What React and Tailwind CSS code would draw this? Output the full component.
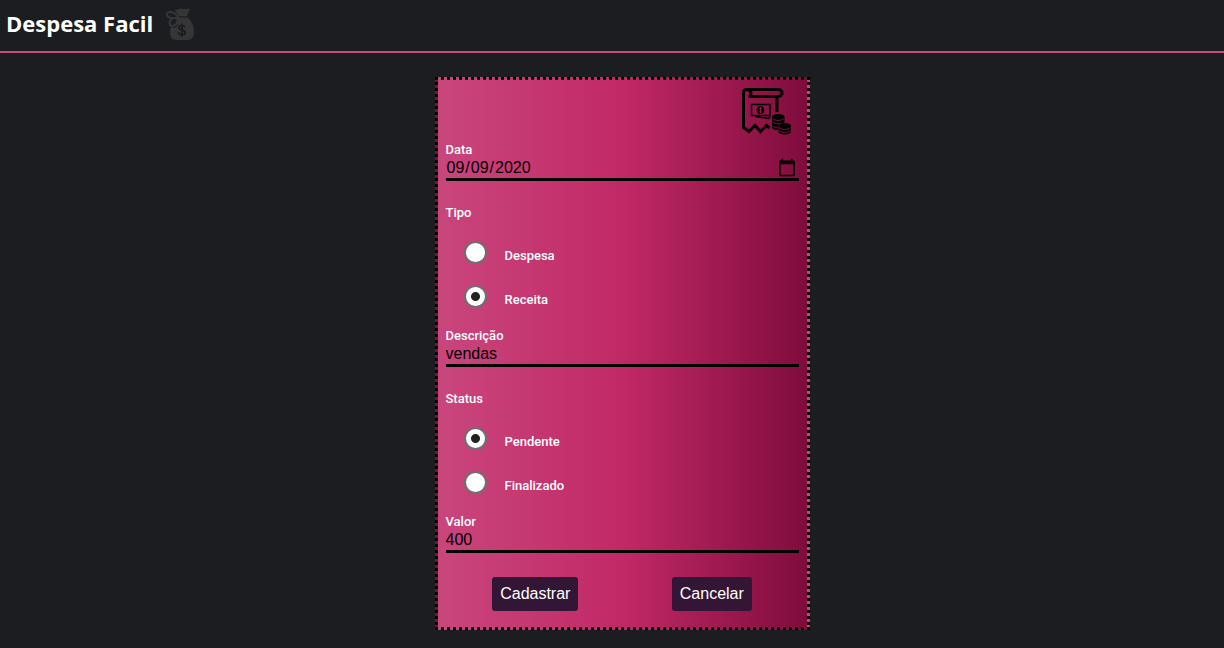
function MoneyBag() {
  return (
    <svg viewBox="0 0 32 36" className="h-9 w-8 text-[#363636]" fill="currentColor" aria-hidden="true">
      <path d="M9.500 3.500c2 .8 3.500.2 5-.7 1.700-.7 3 .7 4.600.5s3.400-1 5.900-.3l-3.500 7.300H14z" />
      <path d="M13 11.500h9.800c3.700 3.500 6.200 8.500 6.200 13.500 0 6-2 9-7 9H12c-5 0-7-3-7-8 0-1.800.2-3.400.7-5 3.800 2 8.300-.5 7.300-6z" />
      <g fill="none" stroke="currentColor" strokeWidth="2">
        <path d="M13 11.500C11 7.500 8 5.800 5 6 2 6.200 1 8.500 2.500 10.300 4.500 12.300 9 12.500 13 11.500zM12.500 11.500C7 12 4.300 14.500 4.500 17.300c.3 2.700 3.500 3.400 5.700 1.700 2-1.500 2.500-4.500 2.300-7.500z" />
      </g>
      <path d="M20 21.300c-.5-1.500-1.600-1.900-3.100-1.900-1.900 0-3 .9-3 2.200 0 3.200 6.300 1.500 6.300 4.800 0 1.600-1.400 2.400-3.200 2.400-1.900 0-3.200-.8-3.500-2.500M17 17.500v13.200" fill="none" stroke="#1b1d20" strokeWidth="1.900" />
    </svg>
  );
}

function ReceiptMoney() {
  return (
    <svg viewBox="0 0 50 48" className="h-12 w-[50px]" fill="none" stroke="#000" strokeWidth="3" aria-hidden="true">
      <path d="M6 2.500h31.500a3.500 3.500 0 0 1 0 7H9M6 2.500C3.500 2.500 2.500 4 2.500 6v34.500l5.500 4 6-6 5.500 6 6-6 3 2.500M6 2.500c5 0 5 7 1.500 7M36 9.500V25" />
      <path d="M10.500 17.500h18.500v11H10.500z" strokeWidth="1.500" />
      <path d="M14 29.500l14 2 1-3" strokeWidth="1.500" />
      <ellipse cx="19.500" cy="23" rx="3.800" ry="4" fill="#000" stroke="none" />
      <path d="M21 21.500c-2-1.500-3.500.5-1.500 1.500s.5 3-1.500 1.500M19.500 20v6" stroke="#a01850" strokeWidth=".9" />
      <g fill="#000" stroke="none">
        <path d="M31 30c0-4 12.500-4 12.500 0v5.500c-3.500.3-6.500 1.500-6.500 4.500v3c-4 0-6-1-6-3z" />
        <path d="M37.500 39c0-4 12.500-4 12.500 0v5.500c0 4-12.500 4-12.500 0z" />
      </g>
      <path d="M31.500 31.500c2 2.500 9 2.500 11.500 0M31.500 35c2 1.800 5 2 8 1.500M31.500 39c1.500 1.200 3 1.500 5 1.500M38 40.500c2 2.500 9 2.500 11.500 0M38 43.500c2 2.500 9 2.500 11.500 0" stroke="#8d1247" strokeWidth=".9" />
    </svg>
  );
}

function Field({ id, label, ...props }) {
  return (
    <div>
      <label htmlFor={id} className="block text-[13px] leading-4 font-medium">{label}</label>
      <input
        id={id}
        className="block h-[23px] w-full min-w-0 border-b-3 border-black bg-transparent font-['Liberation_Sans',Arial,sans-serif] text-base leading-5 text-black outline-none [&::-webkit-calendar-picker-indicator]:mr-0.5 [&::-webkit-calendar-picker-indicator]:size-5 [&::-webkit-calendar-picker-indicator]:p-0"
        {...props}
      />
    </div>
  );
}

function Choice({ name, label, checked }) {
  return (
    <label className="flex h-11 items-center gap-[18px] pl-[18px] text-[13px] leading-4 font-medium">
      <input
        type="radio"
        name={name}
        defaultChecked={checked}
        className="size-[23px] appearance-none rounded-full border-2 border-[#6f6f6f] bg-white checked:bg-[radial-gradient(circle,#222_0_4px,#fff_5px)]"
      />
      <span className="pt-[7px]">{label}</span>
    </label>
  );
}

function Choices({ legend, name, options, selected }) {
  return (
    <fieldset className="mt-6 mb-[10px]">
      <legend className="text-[13px] leading-4 font-medium">{legend}</legend>
      <div className="pt-[9px]">
        {options.map((option) => (
          <Choice key={option} name={name} label={option} checked={option === selected} />
        ))}
      </div>
    </fieldset>
  );
}

export default function App() {
  return (
    <div className="min-h-screen bg-[#1b1d20] font-[Roboto,sans-serif] text-white">
      <header className="flex h-[53px] items-start gap-3 border-b-2 border-[#c94a7e] pt-[6px] pl-[6px]">
        <h1 className="font-['Comic_Sans_MS','Open_Sans',cursive] text-[22px] leading-[34px] font-bold">Despesa Facil</h1>
        <MoneyBag />
      </header>
      <main className="flex justify-center pt-6 pl-5">
        <form className="w-[375px] max-w-full border-3 border-dotted border-black bg-linear-to-r/srgb from-[#c9467c] via-[#c12966] to-[#7f0c3c] px-2 pt-[7px] pb-4">
          <div className="flex justify-end pr-2 pb-[7px]">
            <ReceiptMoney />
          </div>
          <Field id="data" label="Data" type="date" defaultValue="2020-09-09" />
          <Choices legend="Tipo" name="tipo" options={["Despesa", "Receita"]} selected="Receita" />
          <Field id="descricao" label="Descrição" type="text" defaultValue="vendas" />
          <Choices legend="Status" name="status" options={["Pendente", "Finalizado"]} selected="Pendente" />
          <Field id="valor" label="Valor" type="text" inputMode="numeric" defaultValue="400" />
          <div className="mt-6 flex justify-around font-['Liberation_Sans',Arial,sans-serif] text-base">
            <button type="submit" className="h-[34px] rounded-[3px] bg-[#331636] px-2">Cadastrar</button>
            <button type="button" className="h-[34px] rounded-[3px] bg-[#331636] px-2">Cancelar</button>
          </div>
        </form>
      </main>
    </div>
  );
}
